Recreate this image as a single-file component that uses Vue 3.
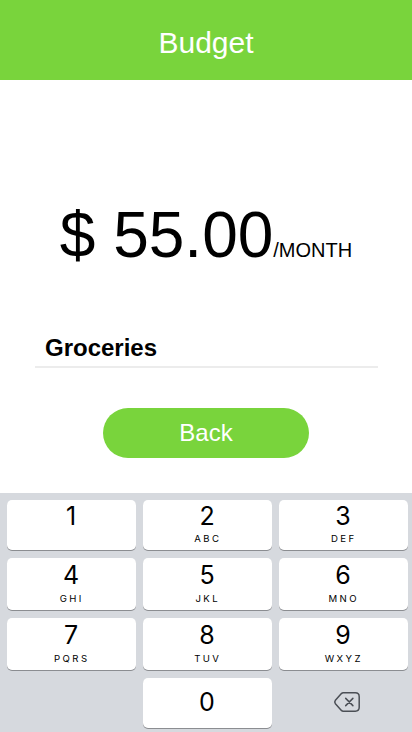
<script setup>
const keys = [
  { digit: '1', letters: '' },
  { digit: '2', letters: 'ABC' },
  { digit: '3', letters: 'DEF' },
  { digit: '4', letters: 'GHI' },
  { digit: '5', letters: 'JKL' },
  { digit: '6', letters: 'MNO' },
  { digit: '7', letters: 'PQRS' },
  { digit: '8', letters: 'TUV' },
  { digit: '9', letters: 'WXYZ' }
]
</script>

<template>
  <div class="screen">
    <header class="header">Budget</header>
    <main class="main">
      <div class="amount"><span class="value">$ 55.00</span><span class="period">/MONTH</span></div>
      <div class="category">Groceries</div>
      <button class="back">Back</button>
    </main>
    <div class="keypad">
      <button v-for="key in keys" :key="key.digit" class="key">
        <span class="digit">{{ key.digit }}</span>
        <span class="letters">{{ key.letters }}</span>
      </button>
      <span></span>
      <button class="key zero"><span class="digit">0</span></button>
      <button class="erase" aria-label="Delete">
        <svg width="28" height="22" viewBox="0 0 28 22" fill="none" stroke="#4b4f55" stroke-width="1.5" stroke-linecap="round" stroke-linejoin="round">
          <path d="M10.2 1.8H22.3Q26.2 1.8 26.2 5.7V16.3Q26.2 20.2 22.3 20.2H10.2Q9.2 20.2 8.4 19.4L2.4 12.8Q1.1 11 2.4 9.2L8.4 2.6Q9.2 1.8 10.2 1.8Z" />
          <path d="M12.7 7.4L19.9 14.6M19.9 7.4L12.7 14.6" />
        </svg>
      </button>
    </div>
  </div>
</template>

<style>
body {
  margin: 0;
  background: #fff;
}
</style>

<style scoped>
.screen {
  display: flex;
  flex-direction: column;
  height: 732px;
  overflow: hidden;
  font-family: "Liberation Sans", Arial, sans-serif;
  color: #000;
}
.header {
  height: 80px;
  box-sizing: border-box;
  padding-top: 6px;
  line-height: 74px;
  text-align: center;
  font-size: 30px;
  color: #fff;
  background: #79d43c;
}
.main {
  height: 413px;
  display: flex;
  flex-direction: column;
  align-items: center;
}
.amount {
  margin-top: 118px;
  height: 74px;
  line-height: 74px;
  white-space: nowrap;
}
.value {
  font-size: 64px;
}
.period {
  font-size: 20px;
}
.category {
  box-sizing: border-box;
  width: 343px;
  height: 40px;
  margin-top: 56px;
  padding-left: 10.5px;
  border-bottom: 2px solid #ececec;
  line-height: 40px;
  font-size: 24px;
  font-weight: 700;
}
button {
  border: 0;
  padding: 0;
  font-family: inherit;
  color: inherit;
}
.back {
  width: 206px;
  height: 50px;
  margin-top: 40px;
  border-radius: 25px;
  background: #79d43c;
  color: #fff;
  font-size: 24px;
}
.keypad {
  flex: 1;
  box-sizing: border-box;
  padding: 6.5px 4px 3.5px 7px;
  display: grid;
  grid-template-columns: repeat(3, 129px);
  grid-template-rows: 50.5px 51.5px 51.5px 50px;
  column-gap: 7px;
  row-gap: 8.3px;
  background: #d6d9de;
  font-family: Inter, sans-serif;
}
.key {
  display: flex;
  flex-direction: column;
  align-items: center;
  padding-top: 3px;
  padding-right: 1px;
  border-radius: 5px;
  background: #fff;
  box-shadow: 0 1px 0 #8b8d91;
}
.key:nth-child(-n + 3) {
  padding-top: 2px;
}
.digit {
  height: 29px;
  line-height: 29px;
  font-size: 25px;
}
.letters {
  margin-top: 2px;
  padding-left: 1.5px;
  height: 13px;
  line-height: 13px;
  font-size: 9.6px;
  letter-spacing: 2.4px;
}
.key:nth-child(-n + 3) .letters {
  margin-top: 1px;
}
.key.zero {
  padding-top: 10px;
}
.erase {
  display: flex;
  align-items: center;
  justify-content: center;
  padding: 0 0 2px 6px;
  background: none;
}
</style>
